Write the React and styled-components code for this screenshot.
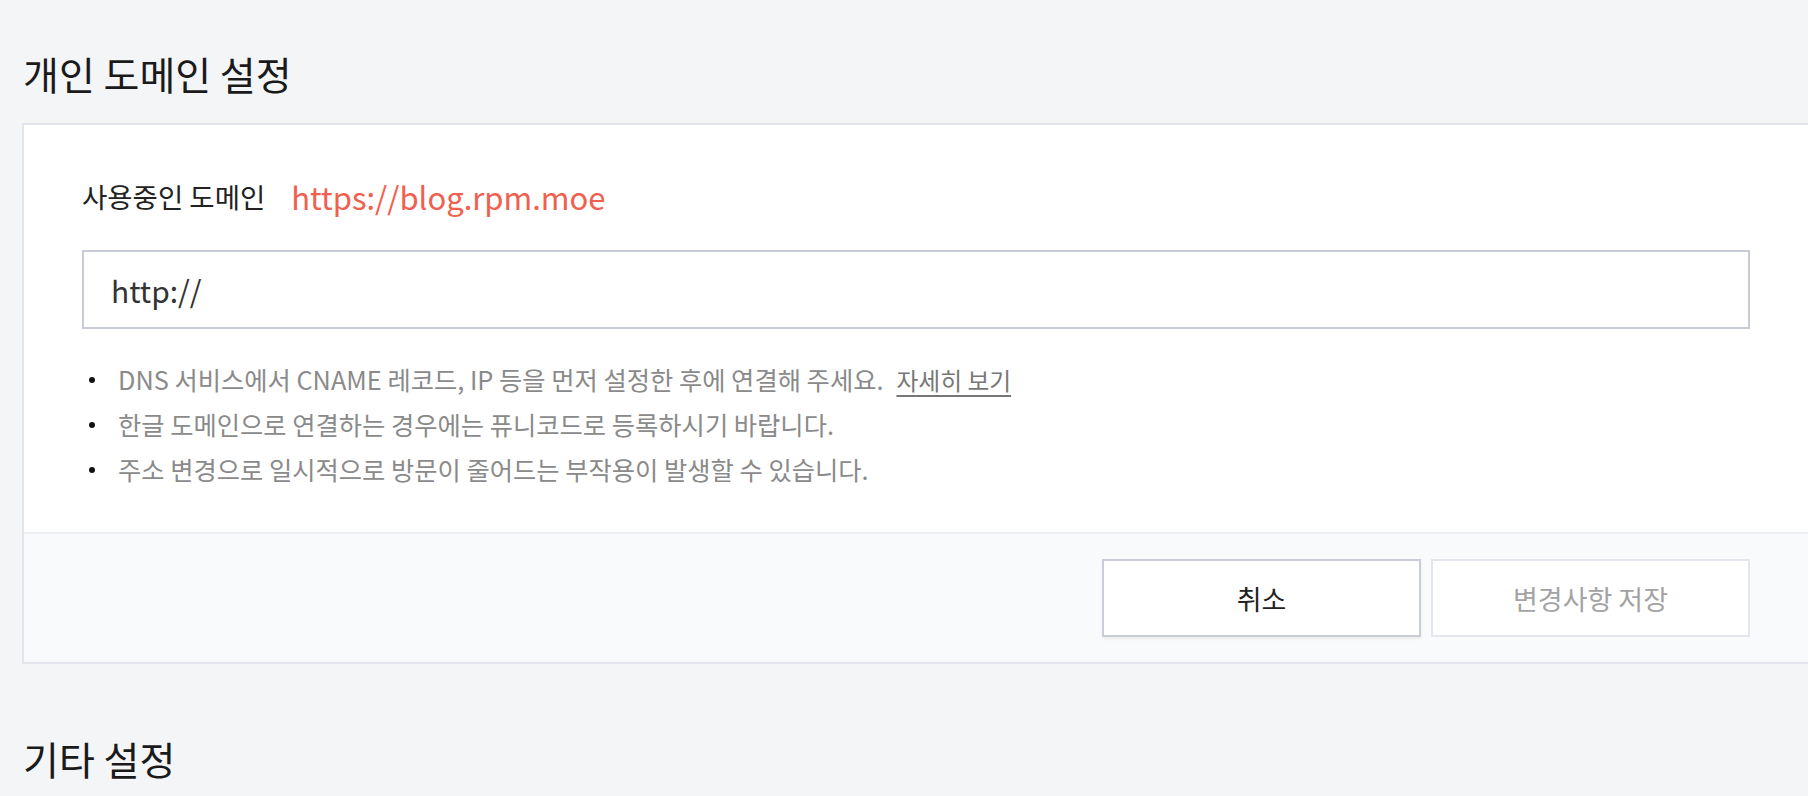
import React from "react";
import styled, { createGlobalStyle } from "styled-components";

const Global = createGlobalStyle`
  html, body { margin: 0; padding: 0; overflow: hidden; }
  body {
    background: #f4f5f7;
    font-family: "Noto Sans CJK KR", "Noto Sans", sans-serif;
    color: #222;
  }
`;

const Page = styled.div`
  padding-left: 22px;
  width: 1808px;
  box-sizing: border-box;
`;

const SectionTitle = styled.h2`
  margin: ${(p) => p.$top}px 0 ${(p) => p.$bottom}px 1px;
  font-size: 39px;
  line-height: 54px;
  font-weight: 400;
  color: #1a1a1a;
`;

const Panel = styled.section`
  width: 1788px;
  box-sizing: border-box;
  border: 2px solid #e2e5ec;
  background: #fff;
`;

const Body = styled.div`
  padding: 47px 58px 40px;
`;

const CurrentRow = styled.div`
  display: flex;
  align-items: center;
  height: 48px;
  gap: 26px;
  margin-bottom: 2px;
`;

const Label = styled.span`
  font-size: 27.5px;
  color: #222;
`;

const DomainUrl = styled.span`
  font-size: 31px;
  color: #f0604e;
`;

const Input = styled.input`
  display: block;
  margin-top: 30px;
  width: 100%;
  height: 79px;
  box-sizing: border-box;
  border: 2px solid #c6cbd6;
  padding: 0 27px;
  font-family: inherit;
  font-size: 30px;
  color: #333;
  outline: none;
  background: #fff;
`;

const Notes = styled.ul`
  list-style: none;
  margin: 28px 0 0;
  padding: 0;
`;

const Note = styled.li`
  position: relative;
  padding-left: 36px;
  font-size: 25.3px;
  line-height: 45px;
  color: #8a8a8a;
  &::before {
    content: "";
    position: absolute;
    left: 7px;
    top: 20px;
    width: 6px;
    height: 6px;
    border-radius: 50%;
    background: #111;
  }
`;

const MoreLink = styled.a`
  margin-left: 13px;
  font-size: 0.94em;
  color: #777;
  text-decoration: underline;
  text-decoration-thickness: 1.5px;
  text-underline-offset: 5px;
  cursor: pointer;
`;

const Footer = styled.div`
  display: flex;
  justify-content: flex-end;
  gap: 10px;
  padding: 25px 58px 25px;
  border-top: 2px solid #eceef2;
  background: #f9fafb;
`;

const Button = styled.button`
  width: 319px;
  height: 78px;
  box-sizing: border-box;
  background: #fff;
  border: 2px solid ${(p) => (p.$primary ? "#c8cdd8" : "#e3e6ec")};
  box-shadow: ${(p) => (p.$primary ? "0 2px 3px rgba(0,0,0,0.06)" : "none")};
  color: ${(p) => (p.$primary ? "#222" : "#a3a3a3")};
  font-family: inherit;
  font-size: 27px;
  cursor: pointer;
`;

export default function App() {
  return (
    <>
      <Global />
      <Page>
        <SectionTitle $top={46} $bottom={23}>개인 도메인 설정</SectionTitle>
        <Panel>
          <Body>
            <CurrentRow>
              <Label>사용중인 도메인</Label>
              <DomainUrl>https://blog.rpm.moe</DomainUrl>
            </CurrentRow>
            <Input defaultValue="http://" />
            <Notes>
              <Note>
                DNS 서비스에서 CNAME 레코드, IP 등을 먼저 설정한 후에 연결해 주세요.
                <MoreLink>자세히 보기</MoreLink>
              </Note>
              <Note>한글 도메인으로 연결하는 경우에는 퓨니코드로 등록하시기 바랍니다.</Note>
              <Note>주소 변경으로 일시적으로 방문이 줄어드는 부작용이 발생할 수 있습니다.</Note>
            </Notes>
          </Body>
          <Footer>
            <Button $primary>취소</Button>
            <Button>변경사항 저장</Button>
          </Footer>
        </Panel>
        <SectionTitle $top={67} $bottom={0}>기타 설정</SectionTitle>
      </Page>
    </>
  );
}
